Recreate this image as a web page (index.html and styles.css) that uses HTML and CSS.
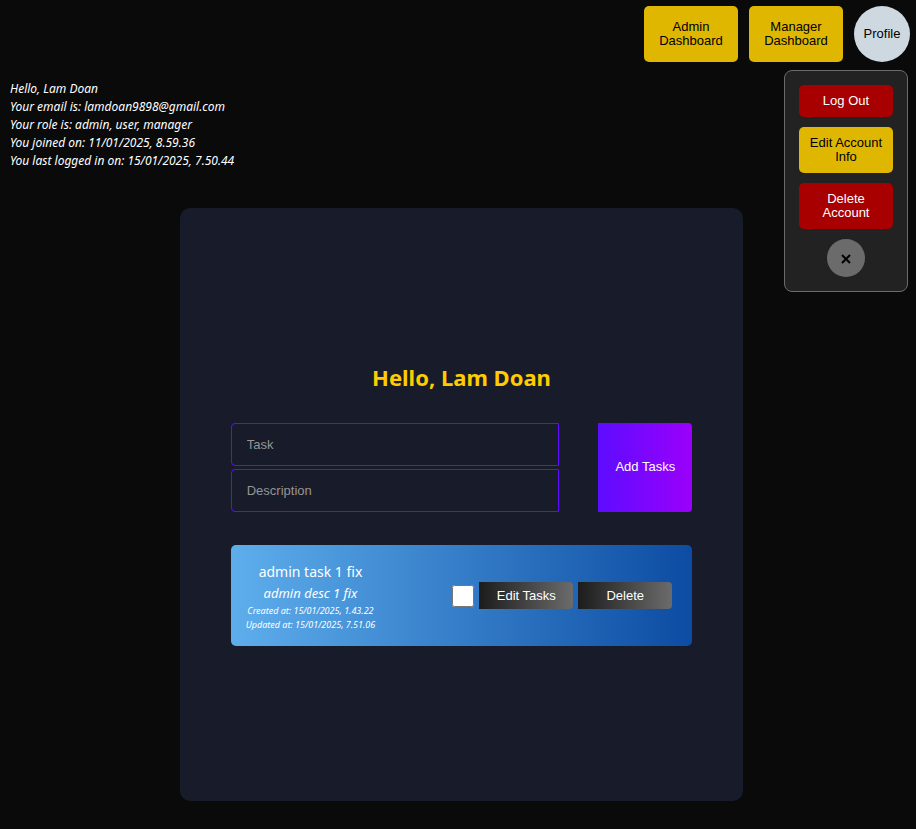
FILE: index.html
```html
<!DOCTYPE html>
<html lang="en">
<head>
<meta charset="utf-8">
<meta name="viewport" content="width=device-width, initial-scale=1">
<title>Tasks</title>
<link rel="stylesheet" href="styles.css">
</head>
<body>
<header class="topbar">
  <button type="button" class="btn btn-gold btn-nav">Admin Dashboard</button>
  <button type="button" class="btn btn-gold btn-nav">Manager Dashboard</button>
  <div class="profile">
    <button type="button" class="profile-toggle">Profile</button>
    <div class="profile-menu">
      <button type="button" class="btn btn-red">Log Out</button>
      <button type="button" class="btn btn-gold">Edit Account Info</button>
      <button type="button" class="btn btn-red">Delete Account</button>
      <button type="button" class="close" aria-label="Close">
        <svg class="close-icon" viewBox="0 0 10 10" aria-hidden="true"><path d="M1 2 9 10M9 2 1 10"/></svg>
      </button>
    </div>
  </div>
</header>
<section class="account">
  <p>Hello, Lam Doan</p>
  <p>Your email is: lamdoan9898@gmail.com</p>
  <p>Your role is: admin, user, manager</p>
  <p>You joined on: 11/01/2025, 8.59.36</p>
  <p>You last logged in on: 15/01/2025, 7.50.44</p>
</section>
<main class="page">
  <div class="card">
    <h1 class="title">Hello, Lam Doan</h1>
    <form class="task-form">
      <div class="fields">
        <input class="field" type="text" placeholder="Task" aria-label="Task">
        <input class="field" type="text" placeholder="Description" aria-label="Description">
      </div>
      <button type="button" class="add">Add Tasks</button>
    </form>
    <article class="task">
      <div class="task-text">
        <p class="task-name">admin task 1 fix</p>
        <p class="task-desc">admin desc 1 fix</p>
        <p class="task-date">Created at: 15/01/2025, 1.43.22</p>
        <p class="task-date">Updated at: 15/01/2025, 7.51.06</p>
      </div>
      <div class="task-actions">
        <input class="check" type="checkbox" aria-label="Task done">
        <button type="button" class="action">Edit Tasks</button>
        <button type="button" class="action">Delete</button>
      </div>
    </article>
  </div>
</main>
</body>
</html>
```
FILE: styles.css
```css
* {
  box-sizing: border-box;
}

body {
  margin: 0;
  min-height: 100vh;
  background: #0a0a0a;
  color: #fff;
  font-family: "Segoe UI", "Noto Sans", sans-serif;
}

p,
h1 {
  margin: 0;
}

button,
input {
  font-family: "Liberation Sans", Arial, sans-serif;
  font-size: 13px;
  line-height: 14px;
}

button {
  border: 0;
  cursor: pointer;
}

.topbar {
  display: flex;
  justify-content: flex-end;
  gap: 11px;
  padding: 6px 6px 0;
}

.btn {
  width: 94px;
  padding: 9px 8px;
  border-radius: 5px;
}

.btn-nav {
  height: 56px;
}

.btn-gold {
  background: #dfb700;
  color: #000;
}

.btn-red {
  background: #a80000;
  color: #fff;
}

.profile {
  position: relative;
}

.profile-toggle {
  width: 56px;
  height: 56px;
  padding: 0;
  border-radius: 50%;
  background: #ced8e1;
  color: #000;
}

.profile-menu {
  position: absolute;
  top: 64px;
  right: 2px;
  display: flex;
  flex-direction: column;
  align-items: center;
  gap: 10px;
  padding: 14px;
  border: 1px solid #6b6b6b;
  border-radius: 8px;
  background: #222;
}

.close {
  display: grid;
  place-items: center;
  width: 38px;
  height: 38px;
  padding: 0;
  border-radius: 50%;
  background: #6b6b6b;
}

.close-icon {
  width: 10px;
  height: 10px;
  overflow: visible;
  fill: none;
  stroke: #000;
  stroke-width: 2;
}

.account {
  padding: 18px 10px 0;
  font-size: 12px;
  font-style: italic;
  line-height: 18px;
}

.page {
  display: flex;
  justify-content: center;
  padding: 38px 0 28px 7px;
}

.card {
  display: flex;
  flex-direction: column;
  justify-content: center;
  width: 62%;
  min-height: 593px;
  padding: 50px 51px 52px;
  border-radius: 10px;
  background: #181b2a;
}

.title {
  margin-bottom: 31px;
  color: #fc0;
  font-size: 22px;
  line-height: 30px;
  text-align: center;
}

.task-form {
  display: flex;
  justify-content: space-between;
  gap: 39px;
  margin-bottom: 33px;
}

.fields {
  display: flex;
  flex: 1;
  flex-direction: column;
  gap: 3px;
}

.field {
  width: 100%;
  height: 43px;
  padding: 0 15px;
  border: 1px solid #5d0cff;
  border-radius: 4px 0 0 4px;
  background: transparent;
  color: #fff;
}

.field::placeholder {
  color: #959595;
}

.add {
  width: 94px;
  border-radius: 0 4px 4px 0;
  background: linear-gradient(90deg, #5d0cff, #9b00fa);
  color: #fff;
}

.task {
  display: flex;
  align-items: center;
  justify-content: space-between;
  padding: 15px 20px 14px 15px;
  border-radius: 5px;
  background: linear-gradient(90deg, #5eaeec, #0c4ca3);
}

.task-text {
  text-align: center;
}

.task-name {
  font-size: 14px;
  line-height: 23px;
}

.task-desc {
  font-size: 13px;
  font-style: italic;
  line-height: 21px;
}

.task-date {
  font-size: 9px;
  font-style: italic;
  line-height: 14px;
}

.task-actions {
  display: flex;
  align-items: center;
  gap: 5px;
}

.check {
  width: 22px;
  height: 22px;
  margin: 0;
}

.action {
  width: 94px;
  height: 27px;
  padding: 0;
  border-radius: 0 4px 4px 0;
  background: linear-gradient(90deg, #1c1c1c, #6b6b6b);
  color: #fff;
}
```
